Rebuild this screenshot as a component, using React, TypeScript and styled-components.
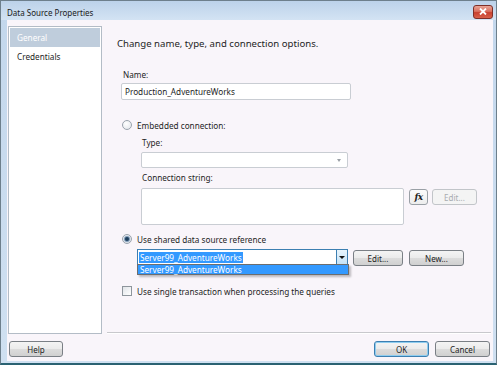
import React from 'react';
import styled, { createGlobalStyle, css } from 'styled-components';

const GlobalStyle = createGlobalStyle`
  html, body {
    margin: 0;
    padding: 0;
    background: #ffffff;
  }
  body {
    font-family: 'Noto Sans', 'Open Sans', sans-serif;
    font-size: 8.2px;
    color: #1e1e1e;
  }
`;

const Window = styled.div`
  width: 497px;
  height: 365px;
  box-sizing: border-box;
  border: 1px solid #6d7f8c;
  border-bottom: 2px solid #2a6272;
  background: linear-gradient(180deg, #c3d7ec 0%, #cfe0f1 100%);
  display: flex;
  flex-direction: column;
`;

const TitleBar = styled.div`
  height: 19px;
  display: flex;
  align-items: center;
  justify-content: space-between;
  padding: 0 3px 0 6px;
  background: linear-gradient(180deg, #bcd2ea 0%, #d3e3f3 100%);
`;

const Title = styled.span`
  font-size: 8px;
  color: #1a1a1a;
  margin-top: 4px;
`;

const CloseButton = styled.div`
  width: 20px;
  height: 14px;
  margin-top: 2px;
  box-sizing: border-box;
  border: 1px solid #7e2f28;
  border-radius: 3px;
  background: linear-gradient(180deg, #e9a597 0%, #d9705f 45%, #c8412f 55%, #d8604a 100%);
  display: flex;
  align-items: center;
  justify-content: center;
`;

const Client = styled.div`
  flex: 1;
  margin: 0 3px 2px 6px;
  background: #f9f5fa;
  display: flex;
  flex-direction: column;
`;

const Main = styled.div`
  height: 308px;
  margin: 6px 0 0 1px;
  display: flex;
`;

const Nav = styled.div`
  width: 94px;
  box-sizing: border-box;
  border: 1px solid #b3bcc6;
  background: #ffffff;
  padding: 1px;
  display: flex;
  flex-direction: column;
`;

const NavItem = styled.div<{ $active?: boolean }>`
  height: 19px;
  line-height: 19px;
  padding-left: 7px;
  font-size: 8.2px;
  color: #1e1e1e;
  ${(p) =>
    p.$active &&
    css`
      background: #bfcddc;
      color: #ffffff;
    `}
`;

const Content = styled.div`
  flex: 1;
  display: flex;
  flex-direction: column;
  padding-left: 15px;
`;

const Heading = styled.div`
  margin-top: 11px;
  font-size: 9.6px;
  line-height: 14px;
  color: #1e1e1e;
`;

const Form = styled.div`
  margin-left: 4px;
  display: flex;
  flex-direction: column;
`;

const Label = styled.div<{ $top: number; $indent?: number }>`
  margin-top: ${(p) => p.$top}px;
  padding-left: ${(p) => p.$indent ?? 2}px;
  height: 12px;
  line-height: 12px;
`;

const TextBox = styled.div<{ $width: number; $height: number; $top?: number }>`
  width: ${(p) => p.$width}px;
  height: ${(p) => p.$height}px;
  margin-top: ${(p) => p.$top ?? 2}px;
  box-sizing: border-box;
  border: 1px solid #c9cdd3;
  border-radius: 2px;
  background: #ffffff;
  padding-left: 3px;
  line-height: ${(p) => p.$height - 2}px;
  position: relative;
`;

const OptionRow = styled.div<{ $top: number }>`
  margin-top: ${(p) => p.$top}px;
  padding-left: 1px;
  height: 12px;
  display: flex;
  align-items: center;
  gap: 5px;
`;

const Radio = styled.span<{ $checked?: boolean }>`
  width: 10px;
  height: 10px;
  box-sizing: border-box;
  border-radius: 50%;
  border: 1px solid #9aa3ad;
  background: radial-gradient(circle at 40% 35%, #ffffff 0%, #dfe3e8 100%);
  display: flex;
  align-items: center;
  justify-content: center;
  &::after {
    content: '';
    width: 4px;
    height: 4px;
    border-radius: 50%;
    background: ${(p) => (p.$checked ? '#1f3f5c' : 'transparent')};
    box-shadow: ${(p) => (p.$checked ? '0 0 1px 1px #6f8fb0' : 'none')};
  }
`;

const CheckBox = styled.span`
  width: 10px;
  height: 10px;
  box-sizing: border-box;
  border: 1px solid #8e959c;
  background: linear-gradient(135deg, #e1e4e8 0%, #ffffff 100%);
`;

const Indent = styled.div<{ $left: number }>`
  margin-left: ${(p) => p.$left}px;
  display: flex;
  flex-direction: column;
`;

const Row = styled.div<{ $top: number }>`
  margin-top: ${(p) => p.$top}px;
  display: flex;
  align-items: flex-start;
`;

const SelectArrow = styled.span`
  position: absolute;
  right: 6px;
  top: 6px;
  width: 0;
  height: 0;
  border-left: 2.5px solid transparent;
  border-right: 2.5px solid transparent;
  border-top: 3px solid #9aa0a6;
`;

const Button = styled.div<{ $width: number; $left: number; $top?: number; $disabled?: boolean; $default?: boolean }>`
  width: ${(p) => p.$width}px;
  height: 16px;
  margin-left: ${(p) => p.$left}px;
  margin-top: ${(p) => p.$top ?? 0}px;
  box-sizing: border-box;
  border: 1px solid #7a7f85;
  border-radius: 3px;
  background: linear-gradient(180deg, #f4f4f4 0%, #ebebeb 48%, #dcdcdc 52%, #d0d0d0 100%);
  display: flex;
  align-items: center;
  justify-content: center;
  font-size: 8px;
  color: #1e1e1e;
  ${(p) =>
    p.$disabled &&
    css`
      border-color: #c2c5c9;
      background: #f4f4f4;
      color: #a8acb0;
    `}
  ${(p) =>
    p.$default &&
    css`
      border-color: #3c7fb1;
      box-shadow: inset 0 0 0 1px #8fcdef;
    `}
`;

const FxButton = styled(Button)`
  font-family: 'DejaVu Serif', 'Liberation Serif', serif;
  font-style: italic;
  font-weight: bold;
  font-size: 9px;
  letter-spacing: -0.5px;
  background: linear-gradient(180deg, #fbfbfb 0%, #ededed 100%);
  border-color: #9aa0a6;
`;

const Combo = styled.div`
  width: 211px;
  height: 16px;
  box-sizing: border-box;
  border: 1px solid #3c7fb1;
  background: #ffffff;
  position: relative;
  display: flex;
  align-items: center;
  padding-left: 1px;
`;

const SelectedText = styled.span`
  background: #3399ff;
  color: #ffffff;
  line-height: 11px;
  padding: 0 1px;
`;

const ComboButton = styled.span`
  position: absolute;
  right: 0;
  top: 0;
  width: 11px;
  height: 14px;
  box-sizing: border-box;
  border-left: 1px solid #3c7fb1;
  background: linear-gradient(180deg, #e8f4fc 0%, #c4e2f7 100%);
  display: flex;
  align-items: center;
  justify-content: center;
  &::after {
    content: '';
    border-left: 3px solid transparent;
    border-right: 3px solid transparent;
    border-top: 3px solid #111111;
  }
`;

const DropList = styled.div`
  position: absolute;
  left: -1px;
  top: 14px;
  width: 212px;
  height: 11px;
  box-sizing: border-box;
  border: 1px solid #6d6d6d;
  background: #3399ff;
  color: #ffffff;
  line-height: 9px;
  padding-left: 2px;
  box-shadow: 2px 2px 2px rgba(0, 0, 0, 0.25);
  z-index: 2;
`;

const Separator = styled.div`
  margin: auto 2px 0 -10px;
  height: 1px;
  background: #c8c8cc;
  border-bottom: 1px solid #ffffff;
`;

const Footer = styled.div`
  margin-top: 7px;
  padding: 0 3px 0 2px;
  display: flex;
  align-items: center;
`;

const Spacer = styled.div`
  flex: 1;
`;

export default function App() {
  return (
    <>
      <GlobalStyle />
      <Window>
        <TitleBar>
          <Title>Data Source Properties</Title>
          <CloseButton>
            <svg width="8" height="7" viewBox="0 0 8 7">
              <path d="M1 0.5 L7 6.5 M7 0.5 L1 6.5" stroke="#ffffff" strokeWidth="1.8" />
            </svg>
          </CloseButton>
        </TitleBar>
        <Client>
          <Main>
            <Nav>
              <NavItem $active>General</NavItem>
              <NavItem>Credentials</NavItem>
            </Nav>
            <Content>
              <Heading>Change name, type, and connection options.</Heading>
              <Form>
                <Label $top={18}>Name:</Label>
                <TextBox $width={230} $height={17}>Production_AdventureWorks</TextBox>

                <OptionRow $top={19}>
                  <Radio />
                  Embedded connection:
                </OptionRow>
                <Indent $left={20}>
                  <Label $top={6} $indent={1}>Type:</Label>
                  <TextBox $width={207} $height={16} $top={3}>
                    <SelectArrow />
                  </TextBox>
                  <Label $top={4} $indent={1}>Connection string:</Label>
                  <Row $top={4}>
                    <TextBox $width={263} $height={37} $top={0} />
                    <FxButton $width={19} $left={5} $top={1}>fx</FxButton>
                    <Button $width={45} $left={4} $top={1} $disabled>Edit...</Button>
                  </Row>
                </Indent>

                <OptionRow $top={8}>
                  <Radio $checked />
                  Use shared data source reference
                </OptionRow>
                <Indent $left={16}>
                  <Row $top={4}>
                    <Combo>
                      <SelectedText>Server99_AdventureWorks</SelectedText>
                      <ComboButton />
                      <DropList>Server99_AdventureWorks</DropList>
                    </Combo>
                    <Button $width={50} $left={5} $top={1}>Edit...</Button>
                    <Button $width={55} $left={6} $top={1}>New...</Button>
                  </Row>
                </Indent>

                <OptionRow $top={19}>
                  <CheckBox />
                  Use single transaction when processing the queries
                </OptionRow>
              </Form>
              <Separator />
            </Content>
          </Main>
          <Footer>
            <Button $width={54} $left={0}>Help</Button>
            <Spacer />
            <Button $width={55} $left={0} $default>OK</Button>
            <Button $width={55} $left={6}>Cancel</Button>
          </Footer>
        </Client>
      </Window>
    </>
  );
}
